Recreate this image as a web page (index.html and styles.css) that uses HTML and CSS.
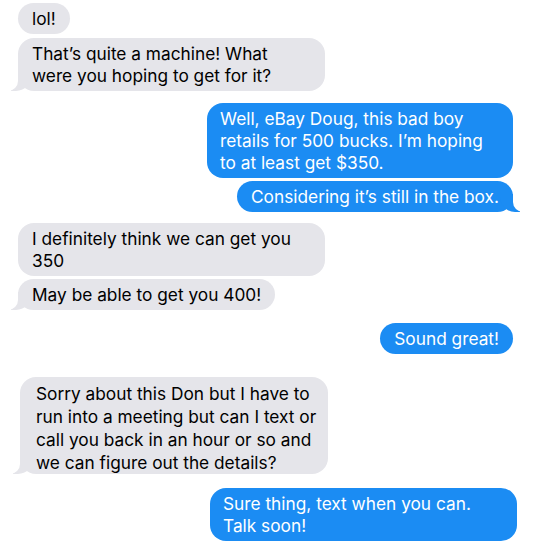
FILE: index.html
```html
<!DOCTYPE html>
<html>
<head>
<meta charset="utf-8">
<link rel="stylesheet" href="styles.css">
</head>
<body>
<div class="thread">
  <div class="msg in b1">lol!</div>
  <div class="msg in wide tail b2">That’s quite a machine! What<br>were you hoping to get for it?</div>
  <div class="msg out wide b3">Well, eBay Doug, this bad boy<br>retails for 500 bucks. I’m hoping<br>to at least get $350.</div>
  <div class="msg out tail b4">Considering it’s still in the box.</div>
  <div class="msg in wide b5">I definitely think we can get you<br>350</div>
  <div class="msg in tail b6">May be able to get you 400!</div>
  <div class="msg out b7">Sound great!</div>
  <div class="msg in wide tail b8">Sorry about this Don but I have to<br>run into a meeting but can I text or<br>call you back in an hour or so and<br>we can figure out the details?</div>
  <div class="msg out wide b9">Sure thing, text when you can.<br>Talk soon!</div>
</div>
</body>
</html>
```

FILE: styles.css
```css
html, body {
  margin: 0;
  padding: 0;
  background: #ffffff;
}
.thread {
  display: flex;
  flex-direction: column;
  padding: 3px 27px 0 18px;
  font-family: Inter, "Open Sans", sans-serif;
  font-size: 17.3px;
  line-height: 22px;
}
.msg {
  position: relative;
  padding: 5px 14px 4px 14px;
  border-radius: 16px;
  white-space: nowrap;
}
.wide {
  box-sizing: border-box;
  width: 307px;
}
.in {
  align-self: flex-start;
  background: #e5e5ea;
  color: #000000;
}
.out {
  align-self: flex-end;
  background: #1b8cf3;
  color: #ffffff;
}
.out.wide {
  padding-left: 13px;
}
.tail.in::before {
  content: "";
  position: absolute;
  bottom: 0;
  left: -7px;
  width: 20px;
  height: 18px;
  background: #e5e5ea;
  border-bottom-right-radius: 15px;
}
.tail.in::after {
  content: "";
  position: absolute;
  bottom: 0;
  left: -10px;
  width: 10px;
  height: 18px;
  background: #ffffff;
  border-bottom-right-radius: 10px;
}
.tail.out::before {
  content: "";
  position: absolute;
  bottom: 0;
  right: -7px;
  width: 20px;
  height: 18px;
  background: #1b8cf3;
  border-bottom-left-radius: 15px;
}
.tail.out::after {
  content: "";
  position: absolute;
  bottom: 0;
  right: -10px;
  width: 10px;
  height: 18px;
  background: #ffffff;
  border-bottom-left-radius: 10px;
}
.b2 { margin-top: 4px; }
.b3 { margin-top: 12px; width: 306px; }
.b4 { margin-top: 3px; }
.b5 { margin-top: 11px; }
.b6 { margin-top: 3px; }
.b7 { margin-top: 13px; }
.b8 {
  margin-top: 23px;
  margin-left: 2px;
  width: 308px;
  padding: 4.5px 16px 0 16px;
  line-height: 23px;
}
.b9 { margin-top: 14px; margin-right: -4px; }
```
